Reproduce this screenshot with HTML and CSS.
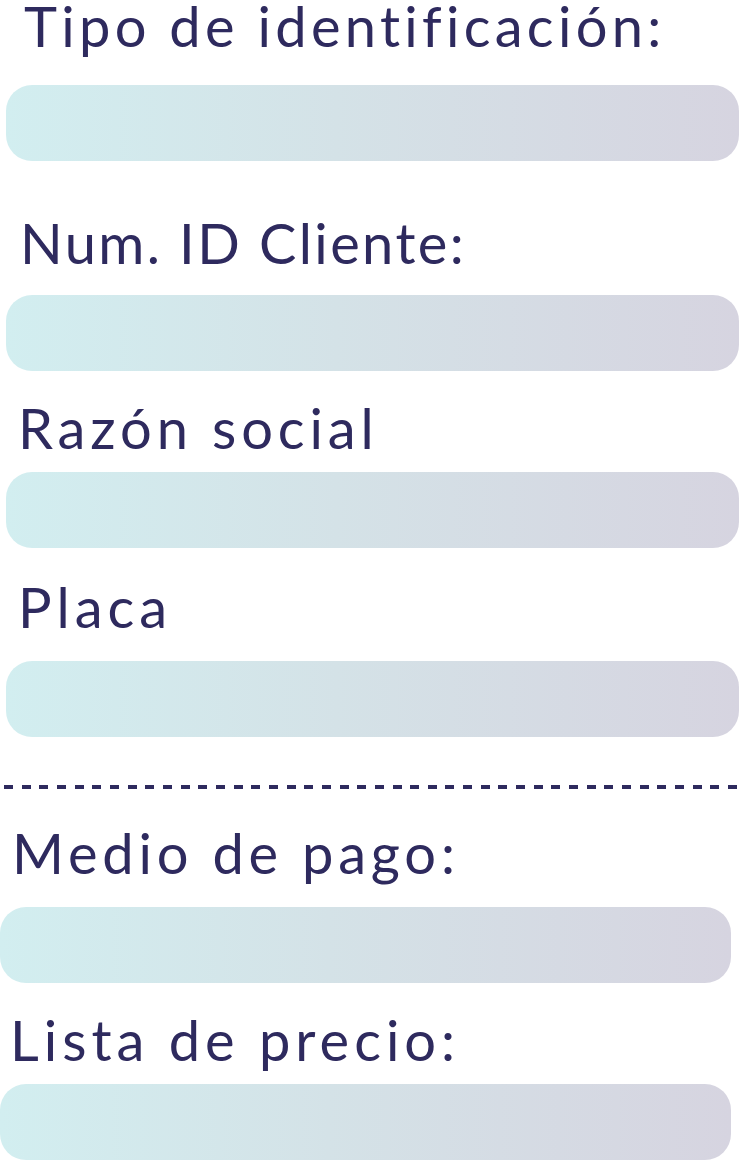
FILE: index.html
```html
<!DOCTYPE html>
<html lang="es">
<head>
<meta charset="utf-8">
<title>Formulario</title>
<link rel="stylesheet" href="styles.css">
</head>
<body>
<main class="form">
  <section class="group group-a">
    <label class="label l1">Tipo de identificación:</label>
    <div class="field f1"></div>
    <label class="label l2">Num. ID Cliente:</label>
    <div class="field f2"></div>
    <label class="label l3">Razón social</label>
    <div class="field f3"></div>
    <label class="label l4">Placa</label>
    <div class="field f4"></div>
  </section>
  <div class="divider"></div>
  <section class="group group-b">
    <label class="label l5">Medio de pago:</label>
    <div class="field f5"></div>
    <label class="label l6">Lista de precio:</label>
    <div class="field f6"></div>
  </section>
</main>
</body>
</html>
```

FILE: styles.css
```css
html, body {
  margin: 0;
  padding: 0;
  background: #ffffff;
}
body {
  width: 739px;
  height: 1160px;
  overflow: hidden;
}
.form {
  display: flex;
  flex-direction: column;
}
.group {
  display: flex;
  flex-direction: column;
}
.group-a {
  padding-left: 6px;
}
.group-b {
  padding-right: 8px;
}
.label {
  display: block;
  font-family: "Lato", "Open Sans", sans-serif;
  font-weight: 400;
  font-size: 56px;
  line-height: 56px;
  height: 56px;
  color: #2e2a5e;
  letter-spacing: 4.6px;
  white-space: nowrap;
}
.field {
  height: 76px;
  border-radius: 26px;
  background: linear-gradient(90deg, #d2eef0 0%, #d4e2e7 45%, #d6d4e0 100%);
}
.group-a .label { padding-left: 14px; }
.group-b .label { padding-left: 10px; }
.l1 { line-height: 52px; height: 52px; padding-left: 18px !important; letter-spacing: 4.3px; }
.f1 { margin-top: 33px; }
.l2 { margin-top: 54px; letter-spacing: 2.4px; }
.f2 { margin-top: 24px; }
.l3 { margin-top: 29px; padding-left: 12px !important; letter-spacing: 4.9px; }
.f3 { margin-top: 16px; }
.l4 { margin-top: 31px; padding-left: 12px !important; letter-spacing: 5px; }
.f4 { margin-top: 26px; }
.divider {
  margin-top: 48px;
  margin-left: 4px;
  height: 4px;
  background: repeating-linear-gradient(90deg, #2e2a5e 0 9px, transparent 9px 17.66px);
}
.l5 { margin-top: 36px; padding-left: 12px !important; letter-spacing: 4.8px; }
.f5 { margin-top: 26px; }
.l6 { margin-top: 29px; letter-spacing: 5px; }
.f6 { margin-top: 16px; }
```
